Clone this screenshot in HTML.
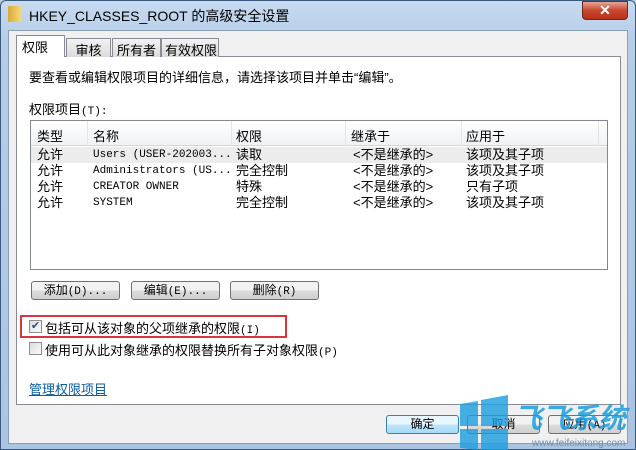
<!DOCTYPE html>
<html><head><meta charset="utf-8"><style>
*{margin:0;padding:0;box-sizing:border-box}
body{width:636px;height:450px;overflow:hidden;background:#b9d1ea;font-family:"Liberation Sans","Noto Sans CJK SC",sans-serif;font-size:12px;color:#000;position:relative}
.abs{position:absolute}
.frame{left:0;top:0;width:636px;height:450px;background:linear-gradient(#c7dbf1,#b6cde7 40px,#aac4e2);border:1px solid #3c5a7c;border-radius:6px 6px 0 0}
.client{left:8px;top:30px;width:620px;height:414px;background:#f0f0f0;border:1px solid #8aa0b8}
.tab{top:38px;height:19px;border:1px solid #898c95;border-bottom:none;background:linear-gradient(#f2f2f2,#dcdcdc);padding:1px 3px;font-size:13px;white-space:nowrap;text-align:center;overflow:hidden}
.panel{left:16px;top:56px;width:605px;height:349px;background:#fff;border:1px solid #898c95}
.lv{left:30px;top:120px;width:578px;height:150px;border:1px solid #828790;background:#fff}
.hdr{left:0;top:0;width:576px;height:25px;background:linear-gradient(#fff,#f1f2f4);border-bottom:1px solid #d5d5d5;font-size:13px}
.hdr span{position:absolute;top:5px}
.sep{position:absolute;top:0;width:1px;height:25px;background:#e3e5e8}
.row{position:absolute;left:0;width:576px;height:16px;font-size:13px}
.row span{position:absolute;top:0;line-height:16px}
.mono{font-family:"Liberation Mono","Noto Sans CJK SC",monospace;font-size:11px}
.btn{height:19px;border:1px solid #707070;border-radius:3px;background:linear-gradient(#f2f2f2 50%,#dddddd 50%,#cfcfcf);text-align:center;line-height:17px;font-size:12px;white-space:nowrap}
.cb{width:13px;height:13px;border:1px solid #8f8f8f;background:linear-gradient(135deg,#dcdcdc,#fafafa)}
</style></head><body>
<div class="abs frame"></div>
<div class="abs" style="left:8px;top:6px;width:13px;height:16px;background:linear-gradient(90deg,#d8a93a,#f5d87a);border-radius:1px"></div>
<div class="abs" style="left:29px;top:6px;font-size:14px;color:#000">HKEY_CLASSES_ROOT 的高级安全设置</div>
<div class="abs" style="left:582px;top:1px;width:46px;height:19px;border:1px solid #6b2a22;border-radius:0 0 4px 4px;background:linear-gradient(#e8a597,#c9472f 50%,#b8301a);color:#fff;text-align:center;font-weight:bold;font-size:14px;line-height:17px">✕</div>
<div class="abs client"></div>
<div class="abs panel"></div>
<div class="abs tab" style="left:16px;top:35px;height:22px;background:#fff;z-index:2;width:49px;text-align:left;padding-left:5px">权限</div>
<div class="abs tab" style="left:66px;width:45px">审核</div>
<div class="abs tab" style="left:112px;width:49px">所有者</div>
<div class="abs tab" style="left:161px;width:58px">有效权限</div>
<div class="abs" style="left:29px;top:67px;font-size:13px">要查看或编辑权限项目的详细信息，请选择该项目并单击“编辑”。</div>
<div class="abs" style="left:29px;top:99px;font-size:13px">权限项目<span class="mono">(T):</span></div>
<div class="abs lv">
 <div class="abs hdr">
  <span style="left:6px">类型</span><div class="sep" style="left:56px"></div>
  <span style="left:62px">名称</span><div class="sep" style="left:200px"></div>
  <span style="left:205px">权限</span><div class="sep" style="left:314px"></div>
  <span style="left:320px">继承于</span><div class="sep" style="left:430px"></div>
  <span style="left:435px">应用于</span><div class="sep" style="left:567px"></div>
 </div>
 <div class="row" style="top:26px;background:#ececec"><span style="left:6px">允许</span><span class="mono" style="left:62px">Users (USER-202003...</span><span style="left:205px">读取</span><span style="left:322px">&lt;不是继承的&gt;</span><span style="left:435px">该项及其子项</span></div>
 <div class="row" style="top:42px"><span style="left:6px">允许</span><span class="mono" style="left:62px">Administrators (US...</span><span style="left:205px">完全控制</span><span style="left:322px">&lt;不是继承的&gt;</span><span style="left:435px">该项及其子项</span></div>
 <div class="row" style="top:58px"><span style="left:6px">允许</span><span class="mono" style="left:62px">CREATOR OWNER</span><span style="left:205px">特殊</span><span style="left:322px">&lt;不是继承的&gt;</span><span style="left:435px">只有子项</span></div>
 <div class="row" style="top:74px"><span style="left:6px">允许</span><span class="mono" style="left:62px">SYSTEM</span><span style="left:205px">完全控制</span><span style="left:322px">&lt;不是继承的&gt;</span><span style="left:435px">该项及其子项</span></div>
</div>
<div class="abs btn" style="left:31px;top:281px;width:89px">添加<span class="mono">(D)...</span></div>
<div class="abs btn" style="left:131px;top:281px;width:89px">编辑<span class="mono">(E)...</span></div>
<div class="abs btn" style="left:230px;top:281px;width:89px">删除<span class="mono">(R)</span></div>
<div class="abs" style="left:20px;top:315px;width:267px;height:23px;border:2px solid #d9343f"></div>
<div class="abs cb" style="left:29px;top:320px;color:#2a4f8a;font-size:11px;line-height:11px;text-align:center">✔</div>
<div class="abs" style="left:45px;top:318px;font-size:13px">包括可从该对象的父项继承的权限<span class="mono">(I)</span></div>
<div class="abs cb" style="left:29px;top:342px"></div>
<div class="abs" style="left:45px;top:340px;font-size:13px">使用可从此对象继承的权限替换所有子对象权限<span class="mono">(P)</span></div>
<div class="abs" style="left:29px;top:379px;font-size:13px;color:#0b5d9b;text-decoration:underline">管理权限项目</div>
<div class="abs btn" style="left:386px;top:415px;width:73px;border-color:#3c7fb1;background:linear-gradient(#eaf6fd 50%,#bee6fd 50%,#a7d9f5)">确定</div>
<div class="abs btn" style="left:467px;top:415px;width:73px">取消</div>
<div class="abs btn" style="left:548px;top:415px;width:73px">应用<span class="mono">(A)</span></div>
<svg class="abs" style="left:440px;top:390px" width="196" height="60">
 <g fill="#1a9ee0" opacity="0.8">
  <polygon points="20,14 38,11 38,36 20,36"/><polygon points="41,10 68,5 68,36 41,36"/>
  <polygon points="20,39 38,39 38,60 20,58"/><polygon points="41,39 68,39 68,60 41,60"/>
 </g>
 <text x="74" y="38" font-family="Noto Sans CJK SC" font-weight="bold" font-size="28" fill="#1a9ee0" font-style="italic" opacity="0.85">飞飞系统</text>
 <text x="92" y="56" font-family="Liberation Sans" font-size="10" fill="#6f8fa8">www.feifeixitong.com</text>
</svg>
</body></html>
